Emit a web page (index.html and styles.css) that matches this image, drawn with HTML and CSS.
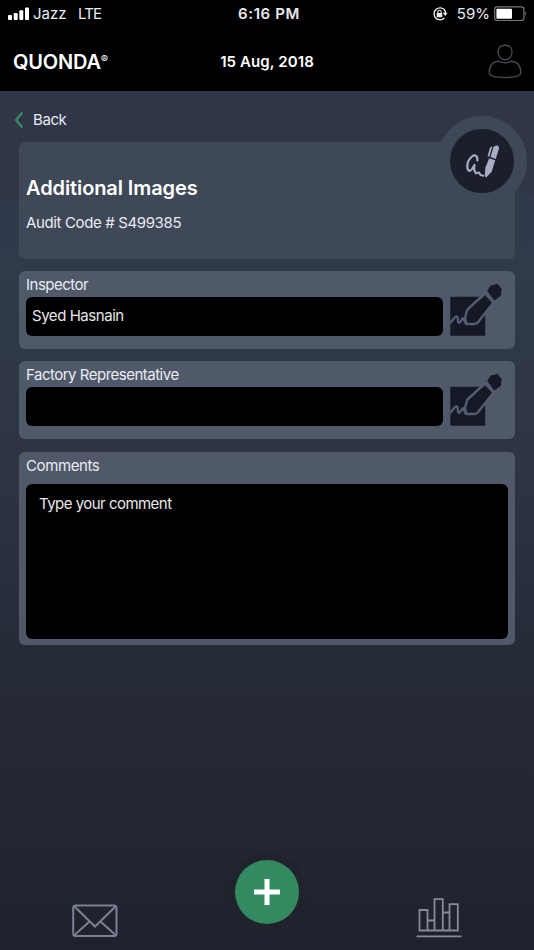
FILE: index.html
```
<!DOCTYPE html>
<html lang="en">
	<head>
		<meta charset="utf-8" />
		<title>Quonda - Additional Images</title>
		<meta name="viewport" content="width=device-width, initial-scale=1.0" />
		<link rel="stylesheet" href="styles.css">
	</head>

	<body>
		<div class="screen">
			<div class="statusbar">
				<div class="carrier">
					<svg width="22" height="14" viewBox="0 0 22 14" fill="#fff">
						<rect x="0" y="8" width="4" height="5" rx="1" />
						<rect x="5.7" y="6" width="4" height="7" rx="1" />
						<rect x="11.3" y="3.3" width="4" height="9.7" rx="1" />
						<rect x="17" y="0.5" width="4" height="12.5" rx="1" />
					</svg>
					<span class="network">Jazz</span>
					<span class="signal">LTE</span>
				</div>
				<div class="time">6:16 PM</div>
				<div class="power">
					<svg width="16" height="16" viewBox="0 0 16 16">
						<path d="M12.7 4A6 6 0 1 0 12.3 12.1M12.4 3.6A6 6 0 0 1 13.5 7.5" fill="none" stroke="#eee" stroke-width="1.4" />
						<path d="M10.8 6.8h4.8l-2.4 3.2z" fill="#eee" />
						<rect x="4.7" y="7" width="5.6" height="4.2" rx="0.6" fill="#eee" />
						<path d="M5.8 7.2V5.9a1.7 1.7 0 0 1 3.4 0v1.3" fill="none" stroke="#eee" stroke-width="1.1" />
					</svg>
					<span class="percent">59%</span>
					<svg width="34" height="16" viewBox="0 0 34 16">
						<rect x="0.7" y="0.9" width="29.2" height="13.6" rx="2.5" fill="none" stroke="#77777a" stroke-width="1.2" />
						<rect x="2.4" y="2.7" width="15.6" height="10" rx="1" fill="#fff" />
						<path d="M31.2 5.3q2 2.3 0 4.7z" fill="#77777a" />
					</svg>
				</div>
			</div>

			<header class="header">
				<h1 class="brand">QUONDA<sup>&reg;</sup></h1>
				<div class="date">15 Aug, 2018</div>
				<svg class="user" width="34" height="36" viewBox="0 0 34 36" fill="none" stroke="#484650" stroke-width="1.4">
					<path d="M17 1.2c-4.5 0-7 2.8-7 6.8s2.7 7.7 7 7.700 7-3.7 7-7.7-2.5-6.8-7-6.800z" />
					<path d="M10 17.2C4.5 18 1.2 22 1.2 28.5c0 3.500 7 5 15.800 5s15.800-1.500 15.800-5c0-6.500-3.300-10.500-8.800-11.300-2 0-3.500 1.700-7 1.700s-5-1.700-7-1.700z" />
				</svg>
			</header>

			<main class="content">
				<a class="back" href="#">
					<svg width="10" height="18" viewBox="0 0 10 18" fill="none" stroke="#348a66" stroke-width="2.5">
						<path d="M8.3 1.5L2.2 9l6.100 7.500" />
					</svg>
					<span>Back</span>
				</a>

				<section class="title-card">
					<h2>Additional Images</h2>
					<p>Audit Code # S499385</p>
					<div class="sign">
						<svg width="64" height="64" viewBox="0 0 64 64">
							<path d="M27.300 31.500C28 27 25 25 22 27.500c-3 2.500-4.700 6-4.700 9.500 0 5 2.500 6.200 4.700 3l2.500-4c-1 4 0 6.500 1.500 8.300l3-.8 1.500 2.500 2.800.7" fill="none" stroke="#a7adc2" stroke-width="2.200" stroke-linecap="round" stroke-linejoin="round" />
							<path d="M37.500 27.500l2.400-8.500q.8-1.700 2.500-1.800l-3 10.300z" fill="#a7adc2" />
							<path d="M40.500 28l2.800-9.500q1.500-2.500 4-2 2 .5 1.700 3l-3.200 10.500z" fill="#a7adc2" />
							<path d="M39.200 29.300l6 2-3.500 11.400-5.500 5.800-1.500-1.500.7-8.500z" fill="#a7adc2" />
						</svg>
					</div>
				</section>

				<section class="field">
					<label for="inspector">Inspector</label>
					<div class="row">
						<input id="inspector" type="text" value="Syed Hasnain" />
						<svg class="pen" width="54" height="54" viewBox="0 0 54 54">
							<path d="M.3 14.700H35.200v39H.3z" fill="#151926" />
							<path d="M35 11.500L18.500 26.500q-1.700 1.500-2 3.500L15 36l1.500 6h8q2 0 3.500-1.700L43.500 20.500z" fill="#151926" stroke="#535c70" stroke-width="2.400" stroke-linejoin="round" />
							<path d="M0 41c2-1.500 5-7.500 7-6.500 1.700 1 0 6 2 6.200s2.500-4.700 4-4.500 1 5.300 4 5.800" fill="none" stroke="#535c70" stroke-width="2.400" />
							<path d="M37.300 9l3-5q1.500-1.500 3.700-.8l2-1.400 2 .7L52 7.500l-1 2.800q.8 3-1 4.200l-5.700 4z" fill="#151926" />
						</svg>
					</div>
				</section>

				<section class="field">
					<label for="representative">Factory Representative</label>
					<div class="row">
						<input id="representative" type="text" value="" />
						<svg class="pen" width="54" height="54" viewBox="0 0 54 54">
							<path d="M.3 14.700H35.200v39H.3z" fill="#151926" />
							<path d="M35 11.500L18.500 26.500q-1.700 1.500-2 3.500L15 36l1.500 6h8q2 0 3.500-1.700L43.500 20.500z" fill="#151926" stroke="#535c70" stroke-width="2.400" stroke-linejoin="round" />
							<path d="M0 41c2-1.500 5-7.500 7-6.500 1.700 1 0 6 2 6.200s2.500-4.700 4-4.500 1 5.300 4 5.800" fill="none" stroke="#535c70" stroke-width="2.400" />
							<path d="M37.300 9l3-5q1.500-1.500 3.700-.8l2-1.400 2 .7L52 7.500l-1 2.800q.8 3-1 4.200l-5.700 4z" fill="#151926" />
						</svg>
					</div>
				</section>

				<section class="field comments">
					<label for="comments">Comments</label>
					<textarea id="comments" placeholder="Type your comment"></textarea>
				</section>
			</main>

			<nav class="tabbar">
				<a href="#" class="mail">
					<svg width="46" height="34" viewBox="0 0 46 34" fill="none" stroke="#7b8093" stroke-width="2">
						<rect x="1.2" y="1.500" width="43.3" height="30.500" rx="2.500" />
						<path d="M2.500 2.500L23 22.500 43.500 2.500M2.500 31l15.500-14M43.500 31L28 17" />
					</svg>
				</a>
				<a href="#" class="add">
					<svg width="26" height="26" viewBox="0 0 26 26" stroke="#fff" stroke-width="5">
						<path d="M13 0v26M0 13h26" />
					</svg>
				</a>
				<a href="#" class="stats">
					<svg width="46" height="40" viewBox="0 0 46 40" fill="none" stroke="#868a9c" stroke-width="1.800">
						<path d="M3.500 12h8v20.500h-8zM18.500 1.200h8.300v31.300h-8.300zM33.500 6.200h8.300v26.300h-8.300zM11.500 22.500h7M26.800 14.500h6.700M11.500 32.500h22M0.500 38.300h45" />
					</svg>
				</a>
			</nav>
		</div>
	</body>
</html>
```
FILE: styles.css
```
* {
  box-sizing: border-box;
}
body {
  margin: 0;
  font-family: Inter, "Liberation Sans", sans-serif;
  font-size: 15px;
  color: #e9ebf2;
  background: #1f222d;
}
.screen {
  display: flex;
  flex-direction: column;
  height: 950px;
  overflow: hidden;
}
.statusbar {
  display: grid;
  grid-template-columns: 1fr auto 1fr;
  align-items: center;
  height: 28px;
  padding: 0 6px 1px 8px;
  background: #000;
}
.carrier, .power {
  display: flex;
  align-items: center;
}
.power {
  justify-content: flex-end;
}
.network {
  margin-left: 3px;
  width: 45px;
}
.signal {
  letter-spacing: -0.9px;
}
.time {
  margin-left: 2px;
  font-weight: 600;
  letter-spacing: 0.6px;
}
.percent {
  margin: 0 4px 0 9px;
}
.header {
  display: grid;
  grid-template-columns: 1fr auto 1fr;
  align-items: center;
  height: 63px;
  padding: 4px 13px 0;
  background: #000;
}
.brand {
  margin: 0;
  font-size: 20px;
  font-weight: 600;
  line-height: 24px;
  letter-spacing: -0.2px;
  color: #fff;
}
.brand sup {
  font-size: 11px;
  font-weight: 400;
  line-height: 1;
  vertical-align: 6px;
}
.date {
  margin-top: -1px;
  font-weight: 600;
  letter-spacing: 0.1px;
  color: #fff;
}
.user {
  justify-self: end;
  margin: 0 -1px 0 0;
}
.content {
  position: relative;
  z-index: 0;
  flex: 1;
  padding: 17px 19px 0;
  background: linear-gradient(#30394b 0, #303a4b 25%, #2d3444 50%, #262b38 75%, #222631 100%);
}
/* darker wave at the top of the page */
.content::before {
  content: "";
  position: absolute;
  z-index: -1;
  top: 0;
  left: 0;
  width: 100%;
  height: 112px;
  background: #303647;
  clip-path: polygon(0 0, 100% 0, 100% 106px, 96.500% 93px, 3.500% 111px, 0 106px);
}
.back {
  display: flex;
  align-items: center;
  gap: 9px;
  height: 23px;
  margin-left: -5px;
  letter-spacing: -0.4px;
  color: inherit;
  text-decoration: none;
}
.title-card {
  position: relative;
  height: 117px;
  margin: 11px 0 12px;
  padding: 34px 7px 0;
  border-radius: 6px;
  background: #3f4857;
}
.title-card h2 {
  margin: 0;
  font-size: 20px;
  font-weight: 600;
  line-height: 24px;
  letter-spacing: -0.1px;
  color: #fff;
}
.title-card p {
  margin: 13px 0 0;
  line-height: 20px;
  letter-spacing: -0.37px;
}
/* badge hanging over the corner of the card */
.sign {
  position: absolute;
  top: -26px;
  right: -12px;
  width: 90px;
  height: 90px;
  border: 13px solid #3f4857;
  border-radius: 50%;
  background: #1a1f2b;
}
.field {
  height: 78px;
  margin-bottom: 12px;
  padding: 4px 7px 0;
  border-radius: 6px;
  background: #50596a;
}
.field label {
  display: block;
  height: 22px;
  line-height: 20px;
  letter-spacing: -0.5px;
}
.row {
  display: flex;
  align-items: flex-end;
  gap: 7px;
  height: 39px;
}
.row .pen {
  flex: none;
}
.field input, .field textarea {
  border: 0;
  border-radius: 6px;
  outline: 0;
  font: inherit;
  letter-spacing: -0.45px;
  color: #e8e8e8;
  background: #000;
}
.field input {
  width: 417px;
  height: 39px;
  padding: 0 6px 2px;
}
.comments {
  height: 193px;
  margin-top: 13px;
}
.field textarea {
  display: block;
  width: 482px;
  height: 155px;
  margin-top: 6px;
  padding: 10px 13px;
  line-height: 20px;
  letter-spacing: -0.53px;
  resize: none;
}
.comments label {
  letter-spacing: -0.4px;
}
.field textarea::placeholder {
  color: #e8e8e8;
}
.tabbar {
  display: flex;
  justify-content: space-between;
  align-items: flex-end;
  height: 110px;
  padding: 0 72px 12px;
  background: linear-gradient(#222631, #1f222d);
}
.tabbar svg {
  display: block;
}
.add {
  display: flex;
  align-items: center;
  justify-content: center;
  width: 64px;
  height: 64px;
  margin-bottom: 14px;
  border-radius: 50%;
  background: #348a60;
  box-shadow: 0 0 0 8px #20222c;
}
```
